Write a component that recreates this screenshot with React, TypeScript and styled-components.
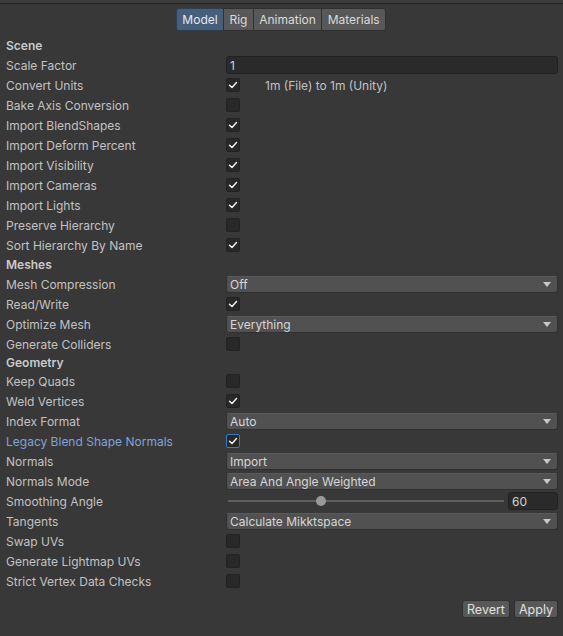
import styled, { createGlobalStyle } from 'styled-components'

const GlobalStyle = createGlobalStyle`
    html, body {
        margin: 0;
        padding: 0;
        background: #383838;
    }
    body {
        font-family: Inter, "Noto Sans", "Liberation Sans", sans-serif;
        font-size: 12px;
        color: #c4c4c4;
    }
`

type Field =
    | { kind: 'header'; label: string; height?: number }
    | { kind: 'check'; label: string; checked: boolean; note?: string; focused?: boolean }
    | { kind: 'text'; label: string; value: string }
    | { kind: 'select'; label: string; value: string }
    | { kind: 'slider'; label: string; value: number; min: number; max: number }

const fields: Field[] = [
    { kind: 'header', label: 'Scene' },
    { kind: 'text', label: 'Scale Factor', value: '1' },
    { kind: 'check', label: 'Convert Units', checked: true, note: '1m (File) to 1m (Unity)' },
    { kind: 'check', label: 'Bake Axis Conversion', checked: false },
    { kind: 'check', label: 'Import BlendShapes', checked: true },
    { kind: 'check', label: 'Import Deform Percent', checked: true },
    { kind: 'check', label: 'Import Visibility', checked: true },
    { kind: 'check', label: 'Import Cameras', checked: true },
    { kind: 'check', label: 'Import Lights', checked: true },
    { kind: 'check', label: 'Preserve Hierarchy', checked: false },
    { kind: 'check', label: 'Sort Hierarchy By Name', checked: true },
    { kind: 'header', label: 'Meshes' },
    { kind: 'select', label: 'Mesh Compression', value: 'Off' },
    { kind: 'check', label: 'Read/Write', checked: true },
    { kind: 'select', label: 'Optimize Mesh', value: 'Everything' },
    { kind: 'check', label: 'Generate Colliders', checked: false },
    { kind: 'header', label: 'Geometry', height: 17 },
    { kind: 'check', label: 'Keep Quads', checked: false },
    { kind: 'check', label: 'Weld Vertices', checked: true },
    { kind: 'select', label: 'Index Format', value: 'Auto' },
    { kind: 'check', label: 'Legacy Blend Shape Normals', checked: true, focused: true },
    { kind: 'select', label: 'Normals', value: 'Import' },
    { kind: 'select', label: 'Normals Mode', value: 'Area And Angle Weighted' },
    { kind: 'slider', label: 'Smoothing Angle', value: 60, min: 0, max: 180 },
    { kind: 'select', label: 'Tangents', value: 'Calculate Mikktspace' },
    { kind: 'check', label: 'Swap UVs', checked: false },
    { kind: 'check', label: 'Generate Lightmap UVs', checked: false },
    { kind: 'check', label: 'Strict Vertex Data Checks', checked: false },
]

const tabs = ['Model', 'Rig', 'Animation', 'Materials']

const CheckMark = () => (
    <svg width="10" height="10" viewBox="0 0 10 10">
        <path d="M1.5 5.2 L4 7.5 L8.5 2.5" fill="none" stroke="#f0f0f0" strokeWidth="1.5" strokeLinecap="round" strokeLinejoin="round" />
    </svg>
)

const renderControl = (field: Field) => {
    switch (field.kind) {
        case 'check':
            return (
                <CheckWrap>
                    <CheckBox $focused={field.focused}>{field.checked && <CheckMark />}</CheckBox>
                    {field.note && <Note>{field.note}</Note>}
                </CheckWrap>
            )
        case 'text':
            return <TextField>{field.value}</TextField>
        case 'select':
            return (
                <Select>
                    <span>{field.value}</span>
                    <Arrow />
                </Select>
            )
        case 'slider':
            return (
                <SliderWrap>
                    <Track>
                        <Thumb style={{ left: `${((field.value - field.min) / (field.max - field.min)) * 100}%` }} />
                    </Track>
                    <NumberField>{field.value}</NumberField>
                </SliderWrap>
            )
        default:
            return null
    }
}

const App = () => (
    <Page>
        <GlobalStyle />
        <TabBar>
            {tabs.map((t) => (
                <Tab key={t} $active={t === 'Model'}>{t}</Tab>
            ))}
        </TabBar>
        <List>
            {fields.map((field) =>
                field.kind === 'header' ? (
                    <Header key={field.label} $height={field.height}>{field.label}</Header>
                ) : (
                    <Row key={field.label}>
                        <Label $focused={field.kind === 'check' && field.focused}>{field.label}</Label>
                        {renderControl(field)}
                    </Row>
                )
            )}
        </List>
        <Footer>
            <Button>Revert</Button>
            <Button>Apply</Button>
        </Footer>
    </Page>
)

export default App

const Page = styled.div`
    width: 563px;
    height: 636px;
    box-sizing: border-box;
    border-top: 3px solid #3d3d3d;
    background: #383838;
    &::before {
        content: '';
        display: block;
        height: 1px;
        background: #232323;
    }
`

const TabBar = styled.div`
    display: flex;
    justify-content: center;
    padding: 4px 1px 0 0;
    height: 23px;
`

const Tab = styled.div<{ $active?: boolean }>`
    height: 23px;
    box-sizing: border-box;
    padding: 0 5.4px;
    display: flex;
    align-items: center;
    font-size: 12px;
    color: ${(p) => (p.$active ? '#e4e8ee' : '#dadada')};
    background: ${(p) => (p.$active ? '#46607c' : '#585858')};
    border: 1px solid ${(p) => (p.$active ? '#2e3f52' : '#303030')};
    margin-left: -1px;
    &:first-child {
        border-radius: 3px 0 0 3px;
        margin-left: 0;
    }
    &:last-child {
        border-radius: 0 3px 3px 0;
    }
`

const List = styled.div`
    display: flex;
    flex-direction: column;
    padding: 5px 5px 0 6px;
`

const Header = styled.div<{ $height?: number }>`
    height: ${(p) => p.$height ?? 19}px;
    display: flex;
    align-items: center;
    font-weight: 600;
    color: #cacaca;
`

const Row = styled.div`
    height: 20px;
    display: grid;
    grid-template-columns: 220px 1fr;
    align-items: center;
`

const Label = styled.div<{ $focused?: boolean }>`
    color: ${(p) => (p.$focused ? '#7ea3d8' : '#c2c2c2')};
    white-space: nowrap;
`

const CheckWrap = styled.div`
    display: flex;
    align-items: center;
    gap: 25px;
`

const CheckBox = styled.div<{ $focused?: boolean }>`
    width: 14px;
    height: 14px;
    box-sizing: border-box;
    border-radius: 2px;
    background: #282828;
    border: 1px solid ${(p) => (p.$focused ? '#3a79bb' : '#222222')};
    display: flex;
    align-items: center;
    justify-content: center;
`

const Note = styled.span`
    color: #c2c2c2;
`

const TextField = styled.div`
    height: 18px;
    box-sizing: border-box;
    background: #2a2a2a;
    border: 1px solid #212121;
    border-radius: 3px;
    padding-left: 3px;
    display: flex;
    align-items: center;
    color: #d2d2d2;
`

const Select = styled.div`
    height: 17px;
    box-sizing: border-box;
    background: #515151;
    border: 1px solid #303030;
    border-top-color: #5a5a5a;
    border-radius: 3px;
    padding: 0 6px 0 3px;
    display: flex;
    align-items: center;
    justify-content: space-between;
    color: #d6d6d6;
`

const Arrow = styled.span`
    width: 0;
    height: 0;
    border-left: 4px solid transparent;
    border-right: 4px solid transparent;
    border-top: 5px solid #c8c8c8;
`

const SliderWrap = styled.div`
    display: grid;
    grid-template-columns: 1fr 50px;
    gap: 4px;
    align-items: center;
`

const Track = styled.div`
    position: relative;
    height: 2px;
    background: #5e5e5e;
    margin-left: 2px;
`

const Thumb = styled.div`
    position: absolute;
    top: 50%;
    width: 10px;
    height: 10px;
    border-radius: 50%;
    background: #999999;
    transform: translate(-4px, -50%);
`

const NumberField = styled.div`
    height: 18px;
    box-sizing: border-box;
    background: #2a2a2a;
    border: 1px solid #212121;
    border-radius: 3px;
    padding-left: 3px;
    display: flex;
    align-items: center;
    color: #d2d2d2;
`

const Footer = styled.div`
    display: flex;
    justify-content: flex-end;
    gap: 4px;
    padding: 9px 5px 0 0;
`

const Button = styled.div`
    height: 18px;
    box-sizing: border-box;
    padding: 0 4px;
    display: flex;
    align-items: center;
    background: #585858;
    border: 1px solid #303030;
    border-radius: 3px;
    color: #e0e0e0;
    font-size: 12.5px;
`
